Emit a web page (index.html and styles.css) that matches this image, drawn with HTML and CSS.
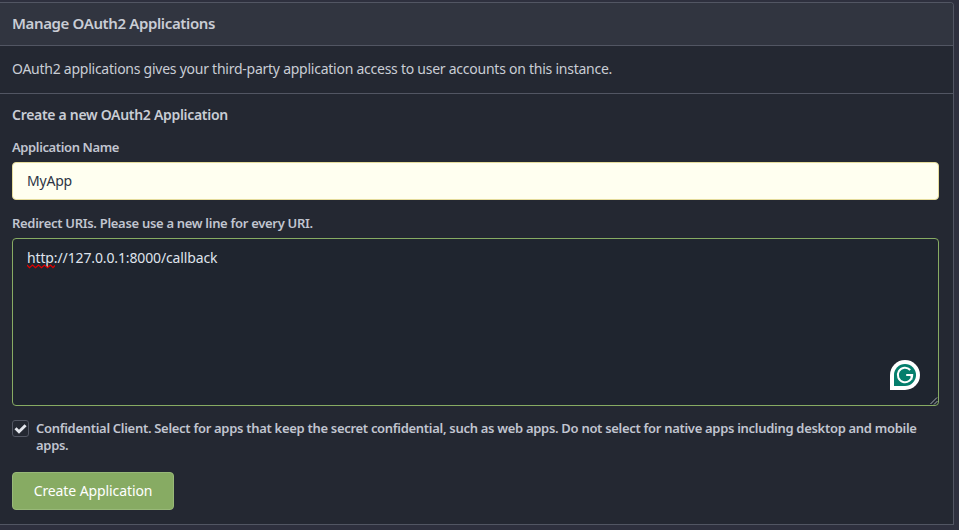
FILE: index.html
```html
<!DOCTYPE html>
<html lang="en">
<head>
<meta charset="utf-8">
<title>Manage OAuth2 Applications</title>
<link rel="stylesheet" href="styles.css">
</head>
<body>
<main class="panel">
  <h4 class="header"><span class="t-header">Manage OAuth2 Applications</span></h4>
  <div class="intro"><span class="t-intro">OAuth2 applications gives your third-party application access to user accounts on this instance.</span></div>
  <form class="form">
    <h5 class="title"><span class="t-title">Create a new OAuth2 Application</span></h5>
    <div class="label"><span class="t-name">Application Name</span></div>
    <div class="input"><span class="t-value">MyApp</span></div>
    <div class="label label-uris"><span class="t-uris">Redirect URIs. Please use a new line for every URI.</span></div>
    <div class="textarea">
      <span class="t-url"><span class="misspelled">http<svg class="squiggle" width="28" height="5" viewBox="0 0 28 5"><path d="M0 1l2.5 2.7L5.5 1l3 2.7L11.500 1l3 2.7L17.500 1l3 2.7L23.500 1l2.500 2.700L28 1.500" fill="none" stroke="#e00000" stroke-width="1.200"/></svg></span>://127.0.0.1:8000/callback</span>
      <svg class="assistant" width="30" height="30" viewBox="0 0 30 30">
        <path d="M0 30V15A15 15 0 1 1 15 30Z" fill="#fff"/>
        <path d="M4 26V15A11 11 0 1 1 15 26Z" fill="#047e6c"/>
        <path d="M20.200 10A7.200 7.200 0 1 0 22.200 15H16.200M21.500 15V19.500" fill="none" stroke="#fff" stroke-width="2"/>
      </svg>
      <svg class="grip" width="8" height="8" viewBox="0 0 8 8"><path d="M.5 7L7 .5M4 7.500L7.500 4" stroke="#a9aeb3" fill="none"/></svg>
    </div>
    <div class="check-row">
      <span class="checkbox"><svg width="15" height="15" viewBox="0 0 15 15"><path d="M2.500 7.300L6 10.800L12.600 4.200" fill="none" stroke="#e4e7ee" stroke-width="2.900"/></svg></span>
      <div class="check-label"><span class="t-check">Confidential Client. Select for apps that keep the secret confidential, such as web apps. Do not select for native apps including desktop and mobile</span><br><span class="t-apps">apps.</span></div>
    </div>
    <button class="submit" type="button"><span class="t-submit">Create Application</span></button>
  </form>
</main>
</body>
</html>
```
FILE: styles.css
```css
* { box-sizing: border-box; }
body {
  margin: 0;
  height: 530px;
  padding-top: 2px;
  overflow: hidden;
  background: #2e303e;
  color: #c9cdd5;
  font: 14px/20px "Noto Sans", sans-serif;
  white-space: nowrap;
}
.panel {
  width: 954px;
  height: 523px;
  border: 1px solid #525663;
  border-left: 0;
  border-radius: 0 4px 0 0;
  background: #242832;
  overflow: hidden;
}
.header {
  margin: 0;
  height: 43px;
  padding: 10px 12px;
  border-bottom: 1px solid #525663;
  background: #313540;
  font-size: 15px;
  font-weight: 600;
}
.intro {
  height: 48px;
  padding: 13px 12px;
  border-bottom: 1px solid #525663;
}
.form { padding: 11px 14px 0 12px; }
.title { margin: 0 0 14px; font-size: 14px; font-weight: 600; }
.label {
  height: 17px;
  margin-bottom: 6px;
  font-size: 13px;
  line-height: 17px;
  font-weight: 600;
  color: #c1c5d0;
}
.input {
  height: 38px;
  padding: 8px 14px;
  border: 1px solid #e5dc9c;
  border-radius: 4px;
  background: #fffff0;
  color: #2c3544;
}
.label-uris { margin-top: 15px; }
.textarea {
  position: relative;
  height: 168px;
  padding: 9px 14px;
  border: 1px solid #87ab63;
  border-radius: 4px;
  background: #1f252f;
  color: #dfe3ec;
}
.misspelled { position: relative; }
.squiggle { position: absolute; left: 0; top: 16px; }
.assistant { position: absolute; right: 18px; bottom: 15px; }
.grip { position: absolute; right: 0; bottom: 0; }
.check-row { display: flex; gap: 7px; margin-top: 14px; }
.checkbox {
  width: 17px;
  height: 17px;
  border: 1px solid #525663;
  border-radius: 3px;
  background: #242832;
}
.checkbox svg { display: block; }
.check-label {
  font-size: 13px;
  line-height: 17px;
  font-weight: 600;
  color: #c1c5d0;
}
.submit {
  display: block;
  width: 162px;
  height: 38px;
  margin-top: 18px;
  padding: 0;
  border: 1px solid #98b878;
  border-radius: 4px;
  background: #87ab63;
  color: #fff;
  font: inherit;
}
.t-header { letter-spacing: -0.37px; }
.t-intro { letter-spacing: -0.25px; }
.t-title { letter-spacing: -0.3px; }
.t-name { letter-spacing: -0.38px; }
.t-value { letter-spacing: -0.2px; }
.t-uris, .t-check, .t-apps { letter-spacing: -0.3px; }
.t-url { letter-spacing: -0.13px; }
.t-submit { letter-spacing: -0.1px; }
```
